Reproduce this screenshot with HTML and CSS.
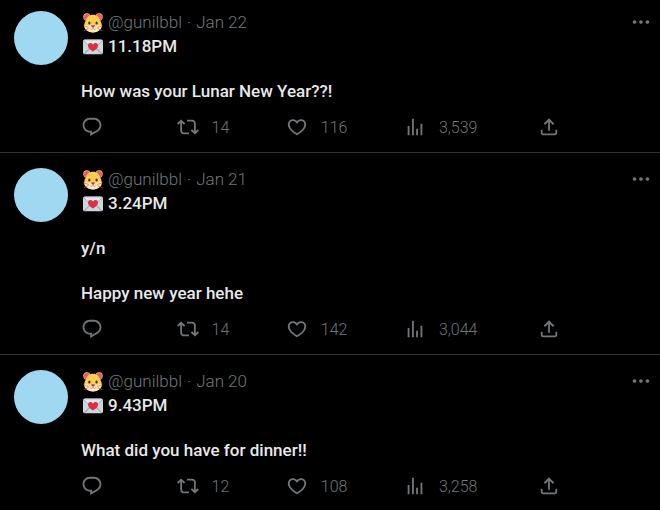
FILE: index.html
```html
<!DOCTYPE html>
<html lang="en">
<head>
<meta charset="UTF-8">
<meta name="viewport" content="width=device-width, initial-scale=1.0">
<title>Timeline</title>
<link rel="stylesheet" href="styles.css">
</head>
<body>

<svg class="sprite" aria-hidden="true">
  <symbol id="reply" viewBox="0 0 24 24"><path d="M1.751 10c0-4.42 3.584-8 8.005-8h4.366c4.49 0 8.129 3.64 8.129 8.13 0 2.96-1.607 5.68-4.196 7.11l-8.054 4.46v-3.69h-.067c-4.49.1-8.183-3.51-8.183-8.01zm8.005-6c-3.317 0-6.005 2.69-6.005 6 0 3.37 2.77 6.08 6.138 6.01l.351-.01h1.761v2.3l5.087-2.81c1.951-1.08 3.163-3.13 3.163-5.36 0-3.39-2.744-6.13-6.129-6.13H9.756z"/></symbol>
  <symbol id="retweet" viewBox="0 0 24 24"><path d="M4.5 3.88l4.432 4.14-1.364 1.46L5.5 7.55V16c0 1.1.896 2 2 2H13v2H7.5c-2.209 0-4-1.79-4-4V7.55L1.432 9.48.068 8.02 4.5 3.88zM16.5 6H11V4h5.5c2.209 0 4 1.79 4 4v8.45l2.068-1.93 1.364 1.46-4.432 4.14-4.432-4.14 1.364-1.46 2.068 1.93V8c0-1.1-.896-2-2-2z"/></symbol>
  <symbol id="like" viewBox="0 0 24 24"><path d="M16.697 5.5c-1.222-.06-2.679.51-3.89 2.16l-.805 1.09-.806-1.09C9.984 6.01 8.526 5.44 7.304 5.5c-1.243.07-2.349.78-2.91 1.91-.552 1.12-.633 2.78.479 4.82 1.074 1.97 3.257 4.27 7.129 6.61 3.87-2.34 6.052-4.64 7.126-6.61 1.111-2.04 1.03-3.7.477-4.82-.561-1.13-1.666-1.84-2.908-1.91zm4.187 7.69c-1.351 2.48-4.001 5.12-8.379 7.67l-.503.3-.504-.3c-4.379-2.55-7.029-5.19-8.382-7.67-1.36-2.5-1.41-4.86-.514-6.67.887-1.79 2.647-2.91 4.601-3.01 1.651-.09 3.368.56 4.798 2.01 1.429-1.45 3.146-2.1 4.796-2.01 1.954.1 3.714 1.22 4.601 3.01.896 1.81.846 4.17-.514 6.67z"/></symbol>
  <symbol id="views" viewBox="0 0 24 24"><path d="M8.75 21V3h2v18h-2zM18 21V8.5h2V21h-2zM4 21l.004-10h2L6 21H4zm9.248 0v-7h2v7h-2z"/></symbol>
  <symbol id="share" viewBox="0 0 24 24"><path d="M12 2.59l5.7 5.7-1.41 1.42L13 6.41V16h-2V6.41l-3.3 3.3-1.41-1.42L12 2.59zM21 15l-.02 3.51c0 1.38-1.12 2.49-2.5 2.49H5.5C4.11 21 3 19.88 3 18.5V15h2v3.5c0 .28.22.5.5.5h12.98c.28 0 .5-.22.5-.5L19 15h2z"/></symbol>
  <symbol id="more" viewBox="0 0 24 24"><path d="M3 12c0-1.1.9-2 2-2s2 .9 2 2-.9 2-2 2-2-.9-2-2zm9 2c1.1 0 2-.9 2-2s-.9-2-2-2-2 .9-2 2 .9 2 2 2zm7 0c1.1 0 2-.9 2-2s-.9-2-2-2-2 .9-2 2 .9 2 2 2z"/></symbol>
  <symbol id="hamster" viewBox="0 0 36 36">
    <circle cx="7" cy="7" r="6.5" fill="#ffcc4d"/>
    <circle cx="29" cy="7" r="6.5" fill="#ffcc4d"/>
    <circle cx="7" cy="7.500" r="5.500" fill="#ea596e"/>
    <circle cx="29" cy="7.500" r="5.500" fill="#ea596e"/>
    <path fill="#ffcc4d" d="M18 3c7 0 11 4 13 10 1 3 3 6 3 10 0 7-8 12-16 12S2 30 2 23c0-4 2-7 3-10C7 7 11 3 18 3z"/>
    <path fill="#ffe8b6" d="M18 20c2 0 3 3 6 3 4 0 8-2 9-1 1 8-7 13-15 13S2 30 3 22c1-1 5 1 9 1 3 0 4-3 6-3z"/>
    <path fill="#dd2e44" d="M15 22h6c1 0 0 2-1 3l-2 2-2-2c-1-1-2-3-1-3z"/>
    <path fill="#fff" d="M15.500 28h5v4h-5z"/>
    <path fill="none" stroke="#c1694f" stroke-width="1.200" d="M18 26v2m0 0c-1 2-4 2-5 0m5 0c1 2 4 2 5 0M1 23l9 3M1 32l9-4M35 23l-9 3M35 32l-9-4"/>
    <ellipse cx="11.500" cy="18" rx="2" ry="2.800" fill="#292f33"/>
    <ellipse cx="24.500" cy="18" rx="2" ry="2.800" fill="#292f33"/>
  </symbol>
  <symbol id="letter" viewBox="0 0 36 36">
    <rect y="5" width="36" height="26" rx="3" fill="#ccd6dd"/>
    <path fill="#99aab5" d="M1 30l12-12 1.500 1.500L3 31zM35 30L23 18l-1.500 1.500L33 31z"/>
    <path fill="#e1e8ed" stroke="#99aab5" stroke-width="1.500" d="M1 6.500l13.500 13c2 2 5 2 7 0L35 6.500C34.500 5.500 33.500 5 33 5H3c-.5 0-1.500.5-2 1.500z"/>
    <path fill="#dd2e44" d="M27 15.500c0-3-2-4.500-4.500-4.500-2 0-3.700 1.200-4.500 3-.8-1.800-2.500-3-4.500-3C11 11 9 12.500 9 15.500c0 5 5 8.500 9 10.500 4-2 9-5.500 9-10.500z"/>
  </symbol>
</svg>

<main class="timeline">
  <article class="tweet">
    <a class="avatar" href="#" aria-label="gunilbbl"></a>
    <div class="body">
      <header class="meta">
        <svg class="emoji" role="img" aria-label="hamster"><use href="#hamster"/></svg>
        <a href="#">@gunilbbl</a><span>·</span><a href="#">Jan 22</a>
        <button class="more" type="button" aria-label="More"><svg class="icon"><use href="#more"/></svg></button>
      </header>
      <div class="text">
        <p><svg class="emoji" role="img" aria-label="love letter"><use href="#letter"/></svg>11.18PM</p>
        <p>How was your Lunar New Year??!</p>
      </div>
      <div class="actions">
        <button class="reply" type="button" aria-label="Reply"><svg class="icon"><use href="#reply"/></svg></button>
        <button type="button" aria-label="14 Retweets"><svg class="icon"><use href="#retweet"/></svg><span>14</span></button>
        <button type="button" aria-label="116 Likes"><svg class="icon"><use href="#like"/></svg><span>116</span></button>
        <button type="button" aria-label="3,539 Views"><svg class="icon"><use href="#views"/></svg><span>3,539</span></button>
        <button class="share" type="button" aria-label="Share"><svg class="icon"><use href="#share"/></svg></button>
      </div>
    </div>
  </article>

  <article class="tweet">
    <a class="avatar" href="#" aria-label="gunilbbl"></a>
    <div class="body">
      <header class="meta">
        <svg class="emoji" role="img" aria-label="hamster"><use href="#hamster"/></svg>
        <a href="#">@gunilbbl</a><span>·</span><a href="#">Jan 21</a>
        <button class="more" type="button" aria-label="More"><svg class="icon"><use href="#more"/></svg></button>
      </header>
      <div class="text">
        <p><svg class="emoji" role="img" aria-label="love letter"><use href="#letter"/></svg>3.24PM</p>
        <p>y/n</p>
        <p>Happy new year hehe</p>
      </div>
      <div class="actions">
        <button class="reply" type="button" aria-label="Reply"><svg class="icon"><use href="#reply"/></svg></button>
        <button type="button" aria-label="14 Retweets"><svg class="icon"><use href="#retweet"/></svg><span>14</span></button>
        <button type="button" aria-label="142 Likes"><svg class="icon"><use href="#like"/></svg><span>142</span></button>
        <button type="button" aria-label="3,044 Views"><svg class="icon"><use href="#views"/></svg><span>3,044</span></button>
        <button class="share" type="button" aria-label="Share"><svg class="icon"><use href="#share"/></svg></button>
      </div>
    </div>
  </article>

  <article class="tweet">
    <a class="avatar" href="#" aria-label="gunilbbl"></a>
    <div class="body">
      <header class="meta">
        <svg class="emoji" role="img" aria-label="hamster"><use href="#hamster"/></svg>
        <a href="#">@gunilbbl</a><span>·</span><a href="#">Jan 20</a>
        <button class="more" type="button" aria-label="More"><svg class="icon"><use href="#more"/></svg></button>
      </header>
      <div class="text">
        <p><svg class="emoji" role="img" aria-label="love letter"><use href="#letter"/></svg>9.43PM</p>
        <p>What did you have for dinner!!</p>
      </div>
      <div class="actions">
        <button class="reply" type="button" aria-label="Reply"><svg class="icon"><use href="#reply"/></svg></button>
        <button type="button" aria-label="12 Retweets"><svg class="icon"><use href="#retweet"/></svg><span>12</span></button>
        <button type="button" aria-label="108 Likes"><svg class="icon"><use href="#like"/></svg><span>108</span></button>
        <button type="button" aria-label="3,258 Views"><svg class="icon"><use href="#views"/></svg><span>3,258</span></button>
        <button class="share" type="button" aria-label="Share"><svg class="icon"><use href="#share"/></svg></button>
      </div>
    </div>
  </article>
</main>

</body>
</html>
```
FILE: styles.css
```css
body {
  margin: 0;
  background-color: #000;
  color: #e7e9ea;
  font-family: Roboto, "Liberation Sans", sans-serif;
  font-size: 17px;
  line-height: 23px;
}
a {
  color: inherit;
  text-decoration: none;
}
button {
  display: flex;
  align-items: center;
  padding: 0;
  border: 0;
  background: none;
  color: inherit;
  font: inherit;
  cursor: pointer;
}
.sprite {
  position: absolute;
  width: 0;
  height: 0;
}
.tweet {
  display: flex;
  gap: 13px;
  padding: 15px 8px 13px 14px;
  border-bottom: 1px solid #2f3336;
}
.tweet:first-child {
  padding-top: 11px;
}
.tweet:last-child {
  padding-bottom: 12px;
  border-bottom: 0;
}
.avatar {
  flex: none;
  width: 54px;
  height: 54px;
  border-radius: 50%;
  background-color: #a0d8f1;
}
.body {
  flex: 1;
  min-width: 0;
}
.meta {
  display: flex;
  align-items: center;
  gap: 5px;
  height: 23px;
  color: #71767b;
  font-weight: 300;
}
.emoji {
  flex: none;
  width: 20px;
  height: 20px;
  margin-left: 2px;
}
.icon {
  display: block;
  width: 22px;
  height: 22px;
  fill: currentColor;
}
.more {
  align-self: flex-start;
  margin-left: auto;
}
.text {
  margin-top: 1px;
  font-weight: 500;
}
.text p {
  margin: 0 0 22px;
}
.text p:last-child {
  margin-bottom: 0;
}
.text .emoji {
  margin-top: 2px;
  margin-right: 5px;
  vertical-align: top;
}
.actions {
  display: flex;
  justify-content: space-between;
  max-width: 479px;
  height: 24px;
  margin-top: 12px;
  color: #71767b;
  font-size: 16px;
  font-weight: 300;
}
.actions span {
  padding-left: 13px;
}
.reply {
  padding-right: 17px;
}
.share {
  padding-left: 4px;
}
```
